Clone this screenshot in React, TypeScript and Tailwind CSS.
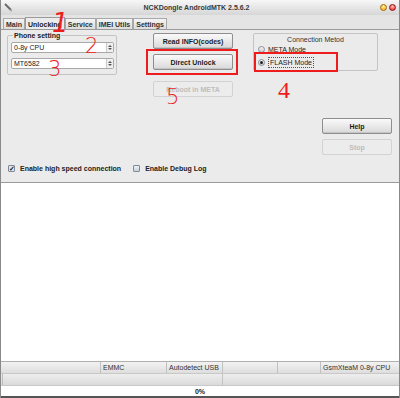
import React from "react";

const tabs = ["Main", "Unlocking", "Service", "IMEI Utils", "Settings"];

function Spin() {
  return (
    <div className="flex h-full w-[7px] flex-col items-center justify-center gap-[1px] border-l border-[#c8c8c8] bg-[#f0f0f0]">
      <span className="h-0 w-0 border-x-[2px] border-b-[2px] border-x-transparent border-b-[#555]" />
      <span className="h-0 w-0 border-x-[2px] border-t-[2px] border-x-transparent border-t-[#555]" />
    </div>
  );
}

function Combo({ value }: { value: string }) {
  return (
    <div className="flex h-[11px] w-[103px] items-center justify-between rounded-[2px] border border-[#a9a9a9] bg-white pl-[2px]">
      <span>{value}</span>
      <Spin />
    </div>
  );
}

function Btn({ label, disabled }: { label: string; disabled?: boolean }) {
  return (
    <div
      className={
        disabled
          ? "flex h-[16px] items-center justify-center rounded-[2px] border border-[#d2d2d2] bg-[#ececec] font-bold text-[#bdbdbd]"
          : "flex h-[16px] items-center justify-center rounded-[2px] border border-[#8e8e8e] bg-gradient-to-b from-[#fafafa] to-[#d9d9d9] font-bold text-[#1d1d1d] shadow-[inset_0_-1px_0_#c4c4c4]"
      }
    >
      {label}
    </div>
  );
}

function Radio({ on }: { on?: boolean }) {
  return (
    <span className="flex h-[7px] w-[7px] items-center justify-center rounded-full border border-[#8a8f99] bg-gradient-to-b from-[#f4f4f4] to-[#c9ccd2]">
      {on && <span className="h-[3px] w-[3px] rounded-full bg-[#222]" />}
    </span>
  );
}

export default function App() {
  return (
    <div
      className="relative flex h-[398px] w-[400px] flex-col overflow-hidden border-x border-[#8a8a8a] bg-white text-[7px] leading-[9px] text-[#222]"
      style={{ fontFamily: '"Liberation Sans", Arial, sans-serif' }}
    >
      {/* title bar */}
      <div className="flex h-[15px] items-center bg-gradient-to-b from-[#f7f7f7] to-[#d6d6d6] px-[3px]">
        <svg width="9" height="9" viewBox="0 0 9 9">
          <path d="M1 1 L7 7" stroke="#6b6b6b" strokeWidth="2" />
          <path d="M6 7 L8 8" stroke="#aaa" strokeWidth="1.5" />
        </svg>
        <div className="flex-1 text-center text-[7px] font-bold text-[#3a3a3a]">NCKDongle AndroidMTK 2.5.6.2</div>
        <div className="flex gap-[2px]">
          <span className="h-[7px] w-[7px] rounded-full border border-[#a86a00] bg-[radial-gradient(circle_at_50%_30%,#fff3a0,#f0a000)]" />
          <span className="h-[7px] w-[7px] rounded-full border border-[#9a1010] bg-[radial-gradient(circle_at_50%_30%,#ffc0c0,#e02020)]" />
        </div>
      </div>

      {/* tabs */}
      <div className="flex h-[14px] items-end bg-[#e4e4e4] pl-[2px]">
        {tabs.map((t) => (
          <div
            key={t}
            className={
              t === "Unlocking"
                ? "-mb-[1px] flex h-[13px] items-center border border-b-0 border-[#9a9a9a] bg-[#ebebeb] px-[2px] font-bold"
                : "flex h-[11px] items-center border border-b-0 border-[#a8a8a8] bg-gradient-to-b from-[#f4f4f4] to-[#dcdcdc] px-[2px] font-bold text-[#333]"
            }
          >
            {t}
          </div>
        ))}
      </div>

      {/* unlocking panel */}
      <div className="flex h-[154px] flex-col border-y border-[#9a9a9a] bg-[#ebebeb]">
        <div className="flex items-start">
          <fieldset className="ml-[6px] mt-[1px] h-[44px] w-[110px] rounded-[2px] border border-[#c4c4c4] px-[2px] pb-[2px]">
            <legend className="ml-[3px] px-[1px] font-bold">Phone setting</legend>
            <div className="flex flex-col gap-[5px] pl-[1px] pt-[2px]">
              <Combo value="0-8y CPU" />
              <Combo value="MT6582" />
            </div>
          </fieldset>

          <div className="ml-[36px] mt-[3px] flex w-[80px] flex-col">
            <Btn label="Read INFO(codes)" />
            <div className="mt-[5px]">
              <Btn label="Direct Unlock" />
            </div>
            <div className="mt-[11px]">
              <Btn label="Reboot in META" disabled />
            </div>
          </div>

          <div className="ml-[20px] mt-[3px] flex h-[38px] w-[125px] flex-col rounded-[2px] border border-[#c4c4c4] px-[4px] pt-[1px]">
            <div className="text-center text-[#333]">Connection Metod</div>
            <div className="mt-[1px] flex items-center gap-[3px]">
              <Radio />
              <span>META Mode</span>
            </div>
            <div className="mt-[3px] flex items-center gap-[3px]">
              <Radio on />
              <span className="border border-dotted border-[#555] px-[1px]">FLASH Mode</span>
            </div>
          </div>
        </div>

        <div className="mr-[7px] mt-[21px] flex w-[70px] flex-col gap-[5px] self-end">
          <Btn label="Help" />
          <Btn label="Stop" disabled />
        </div>

        <div className="ml-[7px] mt-[9px] flex items-center font-bold">
          <span className="flex h-[7px] w-[7px] items-center justify-center rounded-[1px] border border-[#7e8a9c] bg-[#dfe6f0] text-[7px] leading-none text-[#223]">✓</span>
          <span className="ml-[5px]">Enable high speed connection</span>
          <span className="ml-[12px] h-[7px] w-[7px] rounded-[1px] border border-[#7e8a9c] bg-gradient-to-b from-[#eef1f5] to-[#c9d0da]" />
          <span className="ml-[5px]">Enable Debug Log</span>
        </div>
      </div>

      {/* log area */}
      <div className="flex-1 bg-white" />

      {/* status bar */}
      <div className="flex h-[12px] items-center border-t border-[#b0b0b0] bg-gradient-to-b from-[#f2f2f2] to-[#dedede] text-[#333]">
        <div className="h-full w-[100px] border-r border-[#c0c0c0]" />
        <div className="flex h-full w-[66px] items-center border-r border-[#c0c0c0] pl-[2px]">EMMC</div>
        <div className="flex h-full w-[56px] items-center border-r border-[#c0c0c0] pl-[2px]">Autodetect USB</div>
        <div className="h-full w-[55px] border-r border-[#c0c0c0]" />
        <div className="h-full w-[43px] border-r border-[#c0c0c0]" />
        <div className="flex h-full flex-1 items-center pl-[2px]">GsmXteaM 0-8y CPU</div>
      </div>
      <div className="flex h-[12px] border-t border-[#c8c8c8] bg-gradient-to-b from-[#eeeeee] to-[#dadada]">
        <div className="h-full w-[2px] border-r border-[#bdbdbd]" />
        <div className="h-full w-[220px] border-r border-[#c4c4c4]" />
      </div>
      <div className="flex h-[11px] items-center justify-center border-t border-[#c8c8c8] bg-white font-bold">0%</div>
      <div className="h-[2px] bg-[#555]" />

      {/* red annotations */}
      <div className="absolute left-[145px] top-[49px] h-[26px] w-[92px] border-2 border-[#ee1c1c]" />
      <div className="absolute left-[253px] top-[52px] h-[20px] w-[84px] border-2 border-[#ee1c1c]" />
      <div className="absolute left-[51px] top-[10px] text-[26px] italic leading-none text-[#ee1c1c]" style={{ fontFamily: '"DejaVu Sans", sans-serif', fontWeight: 200 }}>1</div>
      <div className="absolute left-[84px] top-[36px] text-[21px] leading-none text-[#ee1c1c]" style={{ fontFamily: '"DejaVu Sans", sans-serif', fontWeight: 200 }}>2</div>
      <div className="absolute left-[47px] top-[59px] text-[21px] leading-none text-[#ee1c1c]" style={{ fontFamily: '"DejaVu Sans", sans-serif', fontWeight: 200 }}>3</div>
      <div className="absolute left-[277px] top-[78px] text-[24px] leading-none text-[#ee1c1c]" style={{ fontFamily: '"Liberation Serif", serif' }}>4</div>
      <div className="absolute left-[165px] top-[87px] text-[21px] leading-none text-[#ee1c1c]" style={{ fontFamily: '"DejaVu Sans", sans-serif', fontWeight: 200 }}>5</div>
    </div>
  );
}
